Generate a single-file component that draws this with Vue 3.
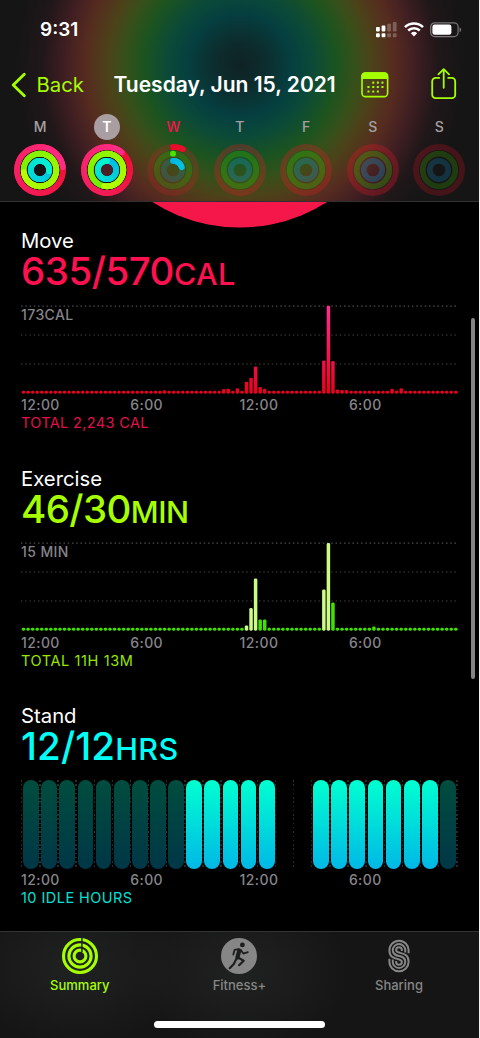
<template>
  <div class="phone">
    <header class="top">
      <!-- status bar -->
      <div class="status">
        <span class="clock">9:31</span>
        <div class="status-icons">
          <svg width="21" height="16" viewBox="0 0 21 16" fill="#fff">
            <rect x="0" y="5" width="3.8" height="4.4" rx="0.8" />
            <rect x="5.6" y="3.6" width="3.8" height="5.8" rx="0.8" />
            <rect x="11.2" y="1.8" width="3.8" height="7.6" rx="0.8" opacity="0.25" />
            <rect x="16.8" y="0" width="3.8" height="9.4" rx="0.8" opacity="0.25" />
            <rect x="0" y="11.2" width="3.8" height="4" rx="0.9" />
            <rect x="5.6" y="11.2" width="3.8" height="4" rx="0.9" />
            <rect x="11.2" y="11.2" width="3.8" height="4" rx="0.9" opacity="0.25" />
            <rect x="16.8" y="11.2" width="3.8" height="4" rx="0.9" opacity="0.25" />
          </svg>
          <svg class="wifi" width="20" height="15" viewBox="0 0 20 15" fill="none" stroke="#fff" stroke-width="2.6">
            <path d="M1 5.1a13 13 0 0 1 18 0" />
            <path d="M4.2 8.5a8.4 8.4 0 0 1 11.6 0" />
            <path d="M10 14.4 6.9 11.3a4.5 4.5 0 0 1 6.2 0z" fill="#fff" stroke="none" />
          </svg>
          <svg class="battery" width="32" height="16" viewBox="0 0 32 16">
            <rect x="0.7" y="0.8" width="27.4" height="13.8" rx="4" fill="none" stroke="#fff" stroke-opacity="0.42" stroke-width="1.2" />
            <rect x="2.4" y="2.6" width="19" height="10.2" rx="2.3" fill="#fff" />
            <path d="M29.6 5.4c2 .6 2 4 0 4.6z" fill="#fff" fill-opacity="0.45" />
          </svg>
        </div>
      </div>

      <!-- navigation -->
      <nav class="nav">
        <svg class="chevron" width="16" height="26" viewBox="0 0 16 26" fill="none" stroke="#a6ff00" stroke-width="2.9" stroke-linecap="round" stroke-linejoin="round">
          <path d="M13.3 2.3 2.2 13l11.1 10.7" />
        </svg>
        <span class="back">Back</span>
        <h1 class="title">Tuesday, Jun 15, 2021</h1>
        <svg class="calendar" width="28" height="26" viewBox="0 0 28 26">
          <rect x="1" y="1" width="25.6" height="23.6" rx="3.4" fill="none" stroke="#a6ff00" stroke-width="1.6" />
          <path d="M.4 7V4.2A4 4 0 0 1 4.4.3h18.8a4 4 0 0 1 4 3.9V7z" fill="#a6ff00" />
          <rect v-for="(dot, i) in calendarDots" :key="i" :x="dot[0]" :y="dot[1]" width="2.1" height="2.1" rx="0.4" fill="#a6ff00" />
        </svg>
        <svg class="share" width="26" height="32" viewBox="0 0 26 32" fill="none" stroke="#a6ff00" stroke-width="1.8" stroke-linecap="round" stroke-linejoin="round">
          <path d="M8.2 9.9H4.6a3.4 3.4 0 0 0-3.4 3.4v13.4a3.4 3.4 0 0 0 3.4 3.4h16.2a3.4 3.4 0 0 0 3.4-3.4V13.3a3.4 3.4 0 0 0-3.4-3.4h-3.6" />
          <path d="M12.7 19.8V1.4M7.4 6.4l5.3-5.2L18 6.4" />
        </svg>
      </nav>

      <!-- week strip -->
      <div class="week">
        <div v-for="(day, i) in days" :key="i" class="day">
          <span class="day-name" :class="day.state">{{ day.name }}</span>
          <svg width="54" height="54" viewBox="-27 -27 54 54" fill="none" stroke-width="5.8">
            <circle v-if="day.progress[0] > 1" r="25" fill="#1c1114" />
            <circle v-if="day.progress[0] > 1" r="6.2" :fill="day.state ? '#4a1f27' : '#151515'" />
            <template v-for="(ring, r) in rings" :key="r">
              <circle :r="ring.radius" :stroke="ring.track" :stroke-opacity="day.dim" />
              <path
                v-for="(seg, s) in arcSegments(ring, day.progress[r])"
                :key="s"
                :d="seg.d"
                :stroke="seg.color"
                stroke-linecap="round"
              />
            </template>
          </svg>
        </div>
      </div>
    </header>

    <main class="content">
      <svg class="big-ring" width="479" height="26" viewBox="0 0 479 26">
        <circle cx="239.7" cy="-137" r="162.5" fill="#f5174a" />
      </svg>

      <section v-for="chart in charts" :key="chart.label" class="metric" :class="chart.kind">
        <h2 class="label">{{ chart.label }}</h2>
        <div class="value">{{ chart.value }}<span class="unit">{{ chart.unit }}</span></div>

        <div v-if="chart.bars" class="chart">
          <span class="scale">{{ chart.scale }}</span>
          <svg class="plot" width="438" height="89" viewBox="0 0 438 89">
            <defs>
              <linearGradient :id="chart.kind" x1="0" y1="89" x2="0" y2="0" gradientUnits="userSpaceOnUse">
                <stop offset="0" :stop-color="chart.from" />
                <stop offset="1" :stop-color="chart.to" />
              </linearGradient>
            </defs>
            <line
              v-for="(y, i) in [1.2, 30, 59]"
              :key="y"
              x1="0"
              x2="437"
              :y1="y"
              :y2="y"
              :stroke="i ? '#2c2c2e' : '#4a4a4c'"
              stroke-width="1.3"
              stroke-dasharray="1.5 2.75"
            />
            <rect
              v-for="(bar, i) in chart.bars"
              :key="i"
              :x="0.8 + i * 4.55"
              :y="88.7 - bar.height"
              width="3.5"
              :height="bar.height"
              rx="1.4"
              :fill="bar.light ? '#cdfb88' : `url(#${chart.kind})`"
            />
          </svg>
        </div>

        <div v-else class="chart stand-chart">
          <div v-for="(hour, i) in standHours" :key="i" class="slot">
            <i v-if="hour" class="pill" :class="hour"></i>
          </div>
        </div>

        <div class="axis">
          <span v-for="(t, i) in ['12:00', '6:00', '12:00', '6:00']" :key="i">{{ t }}</span>
        </div>
        <p class="total">{{ chart.total }}</p>
      </section>

      <i class="scrollbar"></i>
    </main>

    <footer class="tabs">
      <div class="tab active">
        <svg width="38" height="38" viewBox="-19 -19 38 38" fill="none" stroke="#a6ff00" stroke-width="3.1">
          <circle r="16.5" />
          <circle r="11.1" />
          <circle r="5.9" />
          <path d="M1.9-19V-4" stroke="#1e1f1e" stroke-width="1.5" />
        </svg>
        <span>Summary</span>
      </div>
      <div class="tab">
        <svg width="38" height="38" viewBox="0 0 38 38">
          <circle cx="19" cy="19" r="18" fill="#868686" />
          <circle cx="22.4" cy="7.9" r="2.4" fill="#1d1e1e" />
          <g fill="none" stroke="#1d1e1e" stroke-linecap="round" stroke-linejoin="round">
            <path d="M19.3 13.6 17.4 20.4" stroke-width="4.2" />
            <path d="M18.5 12.2 14.6 12.8 13.3 17.6M21 13.2l2.3 3.4 4.5-1.5" stroke-width="1.8" />
            <path d="M18.4 20.7l5.3 3-4.6 4.5M16.4 21.8l-2.6 5.2-4.1 4.3" stroke-width="2.2" />
          </g>
        </svg>
        <span>Fitness+</span>
      </div>
      <div class="tab">
        <svg width="38" height="38" viewBox="-19 -19 38 38" fill="none" stroke="#868686" stroke-width="2">
          <path d="M9.6-2.8V-5.7A9.6 9.6 0 0 0-9.6-5.7C-9.6 1-5.5 2-1 3.2 1.5 3.9 2.9 4.2 2.9 5.8A2.9 2.9 0 0 1-2.9 5.8V5" />
          <path d="M6.25-3.5V-5.7A6.25 6.25 0 0 0-6.25-5.7C-6.25-1.5-3-.8 0 0S6.25 1.5 6.25 5.7A6.25 6.25 0 0 1-6.25 5.7V3.5" />
          <path d="M2.9-5V-5.8A2.9 2.9 0 0 0-2.9-5.8C-2.9-4.2-1.5-3.9 1-3.2 5.5-2 9.6-1 9.6 5.7A9.6 9.6 0 0 1-9.6 5.7V2.8" />
        </svg>
        <span>Sharing</span>
      </div>
      <i class="home-indicator"></i>
    </footer>
  </div>
</template>

<script setup>
const rings = [
  { radius: 23, track: '#f01428', from: [232, 12, 40], to: [255, 45, 135] },
  { radius: 16.3, track: '#46c800', from: [75, 228, 0], to: [182, 255, 0] },
  { radius: 9.2, track: '#12a0dc', from: [0, 182, 228], to: [0, 246, 208] }
]

const days = [
  { name: 'M', dim: 0.3, progress: [1.23, 1.73, 1.27] },
  { name: 'T', dim: 0.3, state: 'selected', progress: [1.11, 1.53, 1] },
  { name: 'W', dim: 0.2, state: 'today', progress: [0.07, 0.001, 0.2] },
  { name: 'T', dim: 0.28, progress: [0, 0, 0] },
  { name: 'F', dim: 0.28, progress: [0, 0, 0] },
  { name: 'S', dim: 0.28, progress: [0, 0, 0] },
  { name: 'S', dim: 0.22, progress: [0, 0, 0] }
]

// splits a ring into short arcs so that the colour can follow the stroke
const arcSegments = (ring, progress) => {
  if (!progress) return []
  const count = Math.max(1, Math.ceil(progress * 40))
  const point = (t) => {
    const a = t * Math.PI * 2
    return `${(Math.sin(a) * ring.radius).toFixed(2)} ${(-Math.cos(a) * ring.radius).toFixed(2)}`
  }
  return Array.from({ length: count }, (_, i) => {
    const start = (progress * i) / count
    const end = (progress * (i + 1)) / count
    const k = progress < 0.5 ? start : i / count
    const rgb = ring.from.map((c, n) => Math.round(c + (ring.to[n] - c) * k))
    return {
      d: `M${point(start)}A${ring.radius} ${ring.radius} 0 0 1 ${point(end)}`,
      color: `rgb(${rgb})`
    }
  })
}

const calendarDots = [
  [11.2, 9.6], [15.8, 9.6], [20.4, 9.6],
  [6.4, 14], [11.2, 14], [15.8, 14], [20.4, 14],
  [6.4, 18.5], [11.2, 18.5], [15.8, 18.5]
]

// one bar for each quarter of an hour
const makeBars = (peaks, light = []) =>
  Array.from({ length: 96 }, (_, i) => ({
    height: peaks[i] || 2.9,
    light: light.includes(i)
  }))

const charts = [
  {
    kind: 'move',
    label: 'Move',
    value: '635/570',
    unit: 'CAL',
    scale: '173CAL',
    total: 'TOTAL 2,243 CAL',
    from: '#e8001c',
    to: '#ff2d92',
    bars: makeBars({
      31: 3.5, 44: 4.7, 45: 4.9, 47: 5.4, 49: 12, 50: 16, 51: 27.3, 52: 6.7, 53: 5,
      66: 33.3, 67: 88, 68: 32.7, 69: 4.3, 70: 3.8, 71: 3.8, 81: 4.9, 82: 3.2, 83: 5.5
    })
  },
  {
    kind: 'exercise',
    label: 'Exercise',
    value: '46/30',
    unit: 'MIN',
    scale: '15 MIN',
    total: 'TOTAL 11H 13M',
    from: '#3ee000',
    to: '#62ea00',
    bars: makeBars(
      { 49: 5.3, 50: 22.7, 51: 52.3, 52: 11.3, 53: 11.3, 66: 41.3, 67: 87.7, 68: 28.3, 77: 4.2 },
      [49, 50, 51, 66, 67]
    )
  },
  {
    kind: 'stand',
    label: 'Stand',
    value: '12/12',
    unit: 'HRS',
    total: '10 IDLE HOURS'
  }
]

const standHours = [
  ...Array(9).fill('idle'),
  ...Array(5).fill('stood'),
  '', '',
  ...Array(7).fill('stood'),
  'idle'
]
</script>

<style>
body {
  background: #f2f2f2;
}
</style>

<style scoped>
.phone {
  width: 479px;
  height: 1038px;
  display: flex;
  flex-direction: column;
  overflow: hidden;
  background: #000;
  color: #fff;
  font-family: Inter, "Liberation Sans", sans-serif;
}

svg {
  display: block;
  flex-shrink: 0;
}

/* header */
.top {
  box-sizing: border-box;
  height: 202px;
  flex-shrink: 0;
  border-bottom: 1px solid #303030;
  background: radial-gradient(circle at 240px 65px, #0f2224 0, #0d2c2d 24px, #053f40 52px, #0b4a38 72px, #1c541f 97px, #37501a 116px, #4c4219 132px, #562b20 155px, #3f1e22 176px, #201719 198px, #151515 225px);
}

.status {
  display: flex;
  justify-content: space-between;
  height: 59px;
  box-sizing: border-box;
  padding: 18px 17px 0 40px;
}

.clock {
  font-size: 19px;
  line-height: 24px;
  font-weight: 600;
}

.status-icons {
  display: flex;
  padding-top: 4px;
}

.wifi {
  margin-left: 7px;
}

.battery {
  margin-left: 6px;
}

.nav {
  display: flex;
  align-items: center;
  height: 51px;
  padding: 0 0 1px 11px;
}

.back {
  width: 67px;
  margin-left: 9.5px;
  font-size: 20.3px;
  color: #a6ff00;
}

.title {
  width: 235.5px;
  margin: 0 0 0 10px;
  font-size: 21px;
  font-weight: 600;
  white-space: nowrap;
}

.calendar {
  margin-left: 12px;
}

.share {
  margin: -2px 0 0 42px;
}

.week {
  display: flex;
  padding: 3px 0 0 7px;
}

.day {
  width: 66.5px;
  display: flex;
  flex-direction: column;
  align-items: center;
}

.day-name {
  width: 26px;
  height: 26px;
  margin-bottom: 3px;
  border-radius: 50%;
  font-size: 14px;
  line-height: 26px;
  font-weight: 500;
  text-align: center;
  color: #a5a1a3;
}

.day-name.selected {
  background: #a99ea2;
  color: #fff;
  font-weight: 600;
}

.day-name.today {
  color: #f5114b;
}

/* content */
.content {
  position: relative;
  flex: 1;
  min-height: 0;
  overflow: hidden;
}

.metric {
  box-sizing: border-box;
  height: 237.6px;
  padding-left: 21px;
}

.label {
  margin: 0;
  font-size: 20.3px;
  line-height: 25px;
  font-weight: 400;
}

.value {
  font-size: 38.5px;
  line-height: 37px;
  font-weight: 500;
  white-space: nowrap;
}

.unit {
  font-size: 30.5px;
}

.move .value {
  color: #ff114f;
  letter-spacing: -0.5px;
}

.move .unit {
  letter-spacing: 0.4px;
}

.exercise .value {
  color: #a6ff00;
  letter-spacing: -0.6px;
}

.exercise .unit {
  letter-spacing: -0.4px;
}

.stand .value {
  color: #00fff6;
  letter-spacing: 0.1px;
}

.stand .unit {
  letter-spacing: 0.5px;
}

.chart {
  display: grid;
  height: 89px;
  margin-top: 12.5px;
}

.chart > .scale,
.chart > .plot {
  grid-area: 1 / 1;
}

.scale {
  padding-top: 1px;
  line-height: 18px;
}

.scale,
.axis {
  font-size: 14px;
  font-weight: 500;
  letter-spacing: 0.4px;
  color: #85858a;
}

.stand-chart {
  display: flex;
  width: 437px;
  margin-top: 13.3px;
  background: repeating-linear-gradient(to bottom, transparent 0 1.5px, #000 1.5px 4.27px), repeating-linear-gradient(to right, #2a2a2c 0 1.4px, transparent 1.4px 18.13px);
}

.slot {
  width: 18.13px;
  padding-left: 2.2px;
  box-sizing: border-box;
}

.pill {
  display: block;
  width: 15.8px;
  height: 88.6px;
  border-radius: 8px;
}

.pill.idle {
  background: linear-gradient(#004d3e, #003747);
}

.pill.stood {
  background: linear-gradient(#00ffd0, #00b8e6);
}

.axis {
  display: grid;
  grid-template-columns: repeat(4, 109.3px);
  padding-top: 2.5px;
  line-height: 18px;
}

.stand .axis {
  padding-top: 2px;
}

.total {
  margin: 0;
  font-size: 14.5px;
  line-height: 18px;
  font-weight: 400;
  letter-spacing: 0.35px;
}

.move .total {
  color: #e0114a;
}

.exercise .total {
  color: #96e600;
  letter-spacing: 0.6px;
}

.stand .total {
  color: #00e0d6;
  letter-spacing: 0.45px;
}

.scrollbar {
  position: absolute;
  top: 116px;
  right: 4px;
  width: 4px;
  height: 361px;
  border-radius: 2px;
  background: #848484;
}

/* tab bar */
.tabs {
  box-sizing: border-box;
  height: 107px;
  flex-shrink: 0;
  display: grid;
  grid-template-columns: repeat(3, 159.6px);
  align-content: start;
  padding-top: 5px;
  border-top: 1px solid #333;
  background: radial-gradient(ellipse 110px 80px at 75px 35px, #202221, transparent), radial-gradient(ellipse 110px 80px at 240px 40px, #202221, transparent), #151515;
}

.tab {
  display: flex;
  flex-direction: column;
  align-items: center;
  font-size: 13px;
  line-height: 18px;
  font-weight: 500;
  color: #868686;
}

.tab span {
  margin-top: 1px;
}

.tab.active {
  color: #a6ff00;
}

.home-indicator {
  grid-column: 1 / -1;
  justify-self: center;
  width: 171px;
  height: 7px;
  margin-top: 27px;
  border-radius: 4px;
  background: #fff;
}
</style>
